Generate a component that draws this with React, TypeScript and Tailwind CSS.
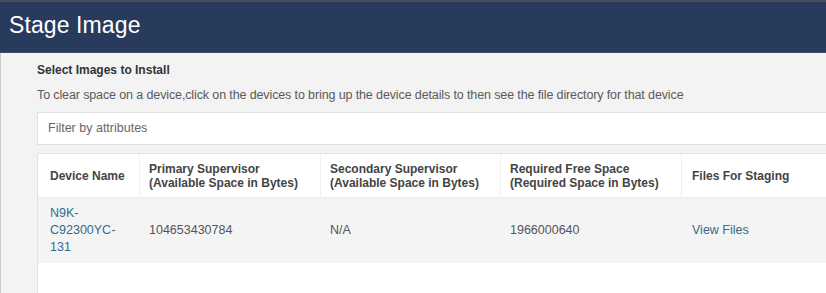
import React from 'react';

const columns = [
  { key: 'device', w: 'w-[102px]', pl: 'pl-[12px]', lines: ['Device Name'] },
  { key: 'primary', w: 'w-[181px]', pl: 'pl-[9px]', lines: ['Primary Supervisor', '(Available Space in Bytes)'] },
  { key: 'secondary', w: 'w-[180px]', pl: 'pl-[9px]', lines: ['Secondary Supervisor', '(Available Space in Bytes)'] },
  { key: 'required', w: 'w-[181px]', pl: 'pl-[9px]', lines: ['Required Free Space', '(Required Space in Bytes)'] },
  { key: 'files', w: 'flex-1', pl: 'pl-[10px]', lines: ['Files For Staging'] },
];

export default function App() {
  return (
    <div className="w-[826px] h-[293px] overflow-hidden bg-[#f3f3f3] font-['Liberation_Sans',Arial,sans-serif]">
      {/* Header */}
      <div className="h-[2px] bg-[#4a4e57]" />
      <div className="h-[51px] bg-[#283b5d] border-b border-[#3b4e6e] flex items-center pl-[9px]">
        <h1 className="text-[23px] text-white font-normal tracking-[0.1px] leading-none pb-[3px]">Stage Image</h1>
      </div>

      {/* Body */}
      <div className="border-l border-[#c9c9c9] h-[240px] pl-[36px] w-[880px]">
        <div className="pt-[10px] text-[12px] font-bold text-[#333] leading-[14px]">Select Images to Install</div>
        <p className="mt-[11px] text-[12.5px] text-[#5a5a5a] leading-[15px] tracking-[-0.12px]">
          To clear space on a device,click on the devices to bring up the device details to then see the file directory for that device
        </p>

        <div className="mt-[9px] h-[33px] bg-white border border-[#e1e1e1] flex items-center pl-[10px]">
          <span className="text-[12.5px] text-[#666]">Filter by attributes</span>
        </div>

        {/* Table */}
        <div className="mt-[8px] bg-white border-t border-l border-[#e2e2e2] h-[200px]">
          <div className="flex h-[44px] border-b border-[#ececec]">
            {columns.map((c, i) => (
              <div
                key={c.key}
                className={`${c.w} ${c.pl} flex flex-col justify-center text-[12px] font-bold text-[#444] leading-[14px] ${
                  i < columns.length - 1 ? 'border-r border-[#f0f0f0]' : ''
                }`}
              >
                {c.lines.map((l) => (
                  <span key={l}>{l}</span>
                ))}
              </div>
            ))}
          </div>

          <div className="flex h-[65px] bg-[#f4f4f4] text-[12.5px] text-[#555] leading-[17px]">
            <div className="w-[102px] pl-[12px] flex flex-col justify-center text-[#326b8d]">
              <span>N9K-</span>
              <span>C92300YC-</span>
              <span>131</span>
            </div>
            <div className="w-[181px] pl-[9px] flex items-center">104653430784</div>
            <div className="w-[180px] pl-[9px] flex items-center">N/A</div>
            <div className="w-[181px] pl-[9px] flex items-center">1966000640</div>
            <div className="flex-1 pl-[10px] flex items-center text-[#326b8d]">View Files</div>
          </div>
        </div>
      </div>
    </div>
  );
}
